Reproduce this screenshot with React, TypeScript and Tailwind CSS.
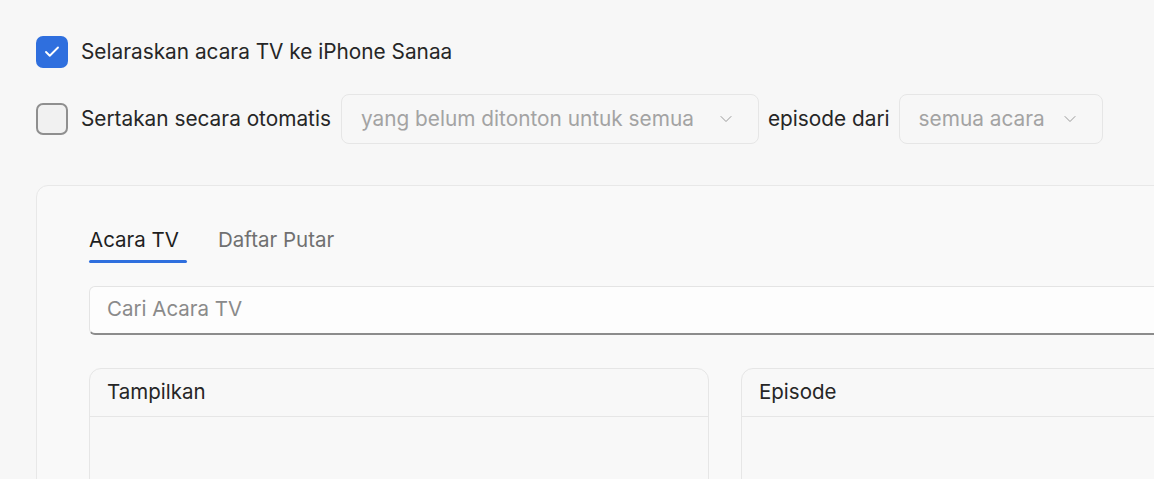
import { Check, ChevronDown } from 'lucide-react';

const font = { fontFamily: 'Inter, "Noto Sans", sans-serif' };

const Select = ({ label, width }: { label: string; width: string }) => (
  <div
    className={`flex h-[50px] ${width} items-center justify-between rounded-[8px] border border-[#e6e6e6] bg-[#f7f7f7] pl-[19px] pr-[22px]`}
  >
    <span className="text-[20.8px] text-[#a3a3a3]">{label}</span>
    <ChevronDown className="h-[20px] w-[20px] text-[#9a9a9a]" strokeWidth={1.2} />
  </div>
);

const ListPane = ({ title }: { title: string }) => (
  <div className="h-[200px] w-[620px] shrink-0 rounded-t-[12px] border border-[#e6e6e6] bg-[#f8f8f8]">
    <div className="flex h-[48px] items-center border-b border-[#e6e6e6] px-[17px] text-[20.5px] text-[#262626]">
      {title}
    </div>
  </div>
);

export default function App() {
  return (
    <div className="h-[479px] w-[1154px] overflow-hidden bg-[#f7f7f7]" style={font}>
      <div className="flex flex-col pl-[36px] pt-[36px]">
        {/* Sync toggle */}
        <div className="flex items-center gap-[13px]">
          <div className="flex h-[32px] w-[32px] items-center justify-center rounded-[7px] bg-[#2f6fde]">
            <Check className="h-[18px] w-[18px] text-white" strokeWidth={2.5} />
          </div>
          <span className="text-[20.8px] text-[#262626]">Selaraskan acara TV ke iPhone Sanaa</span>
        </div>

        {/* Auto include row */}
        <div className="mt-[26px] flex items-center">
          <div className="h-[32px] w-[32px] rounded-[7px] border-2 border-[#8f8f8f] bg-[#f1f1f1]" />
          <span className="ml-[13px] text-[20.8px] text-[#262626]">Sertakan secara otomatis</span>
          <div className="ml-[10px]">
            <Select label="yang belum ditonton untuk semua" width="w-[418px]" />
          </div>
          <span className="mx-[9px] text-[20.8px] text-[#262626]">episode dari</span>
          <Select label="semua acara" width="w-[204px]" />
        </div>

        {/* Panel */}
        <div className="mt-[41px] w-[1378px] rounded-[12px] border border-[#e8e8e8] bg-[#f9f9f9] px-[52px] pt-[40px]">
          <div className="flex items-start gap-[31px]">
            <div className="flex flex-col">
              <span className="h-[28px] pr-[8px] text-[20.5px] leading-[28px] text-[#1f1f1f]">Acara TV</span>
              <div className="mt-[6px] h-[3px] w-full rounded-full bg-[#2f6fde]" />
            </div>
            <span className="h-[28px] text-[20.5px] leading-[28px] text-[#707070]">Daftar Putar</span>
          </div>

          <div className="mt-[23px] flex h-[49px] items-center rounded-[6px] border border-[#e4e4e4] border-b-2 border-b-[#8c8c8c] bg-[#fdfdfd] px-[17px] pb-[2px]">
            <span className="text-[20.5px] text-[#8a8a8a]">Cari Acara TV</span>
          </div>

          <div className="mt-[33px] flex gap-[32px]">
            <ListPane title="Tampilkan" />
            <ListPane title="Episode" />
          </div>
        </div>
      </div>
    </div>
  );
}
